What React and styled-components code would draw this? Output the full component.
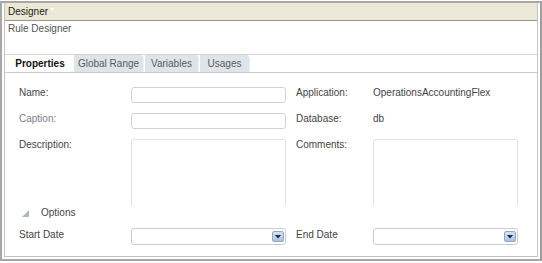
import React from "react";
import styled, { createGlobalStyle } from "styled-components";

const GlobalStyle = createGlobalStyle`
  html, body {
    margin: 0;
    background: #fff;
  }
  body {
    font-family: "Liberation Sans", Arial, sans-serif;
    font-size: 10px;
    color: #333;
  }
`;

const Frame = styled.div`
  margin-top: 1px;
  height: 260px;
  box-sizing: border-box;
  border: 2px solid #a7a7a7;
  border-right-color: #9d9d9d;
  padding: 0 2px 2px;
  display: flex;
`;

const Panel = styled.div`
  flex: 1;
  display: flex;
  flex-direction: column;
  border: 1px solid #c3c3c3;
  border-top: none;
  min-width: 0;
`;

const Header = styled.div`
  height: 17px;
  line-height: 17px;
  padding-left: 3px;
  background: #ebe8d6;
  border-bottom: 1px solid #9a988a;
  color: #1b1b1b;
  display: flex;
  align-items: center;
`;

const HeaderMark = styled.span`
  width: 0;
  height: 0;
  margin: -4px 0 0 2px;
  border-left: 2px solid transparent;
  border-right: 2px solid transparent;
  border-top: 3px solid #fff;
`;

const Title = styled.div`
  height: 34px;
  padding: 2px 0 0 3px;
  box-sizing: border-box;
  line-height: 12px;
  color: #555;
  border-bottom: 1px solid #d4d4d4;
`;

const TabBar = styled.div`
  height: 17px;
  display: flex;
  gap: 1px;
  border-bottom: 1px solid #cacaca;
`;

const Tab = styled.div`
  flex: 0 0 ${(p) => p.$width}px;
  box-sizing: border-box;
  white-space: nowrap;
  text-align: center;
  padding-left: ${(p) => (p.$active ? 2 : 0)}px;
  line-height: 17px;
  background: ${(p) => (p.$active ? "#fff" : "#dfe4e9")};
  color: ${(p) => (p.$active ? "#111" : "#5b5b5b")};
  font-weight: ${(p) => (p.$active ? "bold" : "normal")};
  border-top-right-radius: 4px;
  border-right: ${(p) => (p.$active ? "none" : "1px solid #eef1f4")};
`;

const Content = styled.div`
  flex: 1;
  padding: 14px 0 0 14px;
  display: flex;
  flex-direction: column;
`;

const Row = styled.div`
  display: grid;
  grid-template-columns: 112px 165px 77px 145px;
  align-items: start;
  margin-top: ${(p) => p.$gap || 0}px;
`;

const Label = styled.div`
  line-height: 12px;
  padding-top: ${(p) => p.$top || 0}px;
  color: ${(p) => (p.$muted ? "#7d7d8a" : "#444")};
`;

const Value = styled.div`
  line-height: 12px;
  color: #444;
`;

const Input = styled.div`
  width: 155px;
  height: 16px;
  box-sizing: border-box;
  border: 1px solid #d2d2d2;
  border-radius: 3px;
  background: #fff;
`;

const TextArea = styled.div`
  width: ${(p) => p.$width}px;
  height: 67px;
  box-sizing: border-box;
  border: 1px solid #e2e2e2;
  border-bottom: none;
  border-radius: 3px 3px 0 0;
`;

const Combo = styled.div`
  width: ${(p) => p.$width}px;
  height: 17px;
  box-sizing: border-box;
  border: 1px solid #cdcdcd;
  border-radius: 3px;
  display: flex;
  align-items: center;
  justify-content: flex-end;
  padding-right: 1px;
`;

const DropButton = styled.span`
  width: 12px;
  height: 11px;
  box-sizing: border-box;
  border: 1px solid #8fa9c6;
  border-radius: 2px;
  background: linear-gradient(#d3e2f2, #a9c3df);
  display: flex;
  align-items: center;
  justify-content: center;
`;

const OptionsRow = styled.div`
  height: 12px;
  margin-top: 1px;
  display: flex;
  align-items: center;
  gap: 12px;
  padding-left: 3px;
  line-height: 12px;
  color: #444;
`;

function ComboBox({ width }) {
  return (
    <Combo $width={width}>
      <DropButton>
        <svg width="6" height="4" viewBox="0 0 6 4">
          <polygon points="0,0 6,0 3,3.5" fill="#1f2a3a" />
        </svg>
      </DropButton>
    </Combo>
  );
}

export default function App() {
  return (
    <>
      <GlobalStyle />
      <Frame>
        <Panel>
          <Header>
            Designer
            <HeaderMark />
          </Header>
          <Title>Rule Designer</Title>
          <TabBar>
            <Tab $active $width={68}>Properties</Tab>
            <Tab $width={70}>Global Range</Tab>
            <Tab $width={54}>Variables</Tab>
            <Tab $width={50}>Usages</Tab>
          </TabBar>
          <Content>
            <Row>
              <Label>Name:</Label>
              <Input />
              <Label>Application:</Label>
              <Value>OperationsAccountingFlex</Value>
            </Row>
            <Row $gap={10}>
              <Label $muted>Caption:</Label>
              <Input />
              <Label>Database:</Label>
              <Value>db</Value>
            </Row>
            <Row $gap={10}>
              <Label>Description:</Label>
              <TextArea $width={155} />
              <Label>Comments:</Label>
              <TextArea $width={145} />
            </Row>
            <OptionsRow>
              <svg width="7" height="7" viewBox="0 0 7 7">
                <polygon points="7,0 7,7 0,7" fill="#a9b7c6" />
              </svg>
              Options
            </OptionsRow>
            <Row $gap={9}>
              <Label $top={1}>Start Date</Label>
              <ComboBox width={155} />
              <Label $top={1}>End Date</Label>
              <ComboBox width={145} />
            </Row>
          </Content>
        </Panel>
      </Frame>
    </>
  );
}
